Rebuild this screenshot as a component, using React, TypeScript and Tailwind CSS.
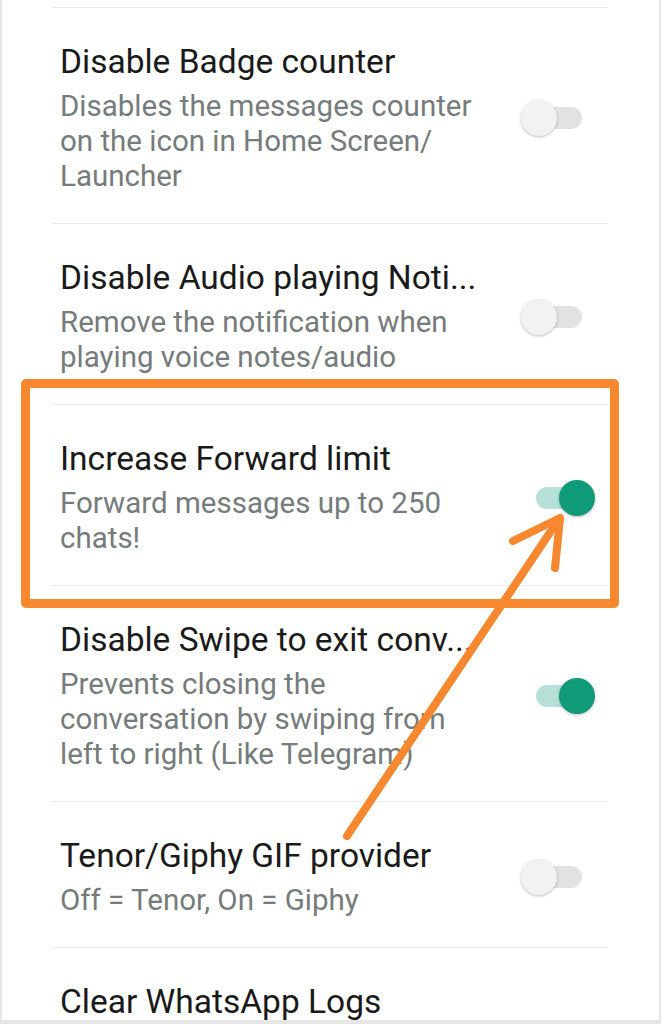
import React from 'react';

type Setting = {
  title: string;
  lines: string[];
  on?: boolean;
  toggle?: boolean;
};

const SETTINGS: Setting[] = [
  {
    title: 'Disable Badge counter',
    lines: ['Disables the messages counter', 'on the icon in Home Screen/', 'Launcher'],
    toggle: true,
  },
  {
    title: 'Disable Audio playing Noti...',
    lines: ['Remove the notification when', 'playing voice notes/audio'],
    toggle: true,
  },
  {
    title: 'Increase Forward limit',
    lines: ['Forward messages up to 250', 'chats!'],
    toggle: true,
    on: true,
  },
  {
    title: 'Disable Swipe to exit conv...',
    lines: ['Prevents closing the', 'conversation by swiping from', 'left to right (Like Telegram)'],
    toggle: true,
    on: true,
  },
  {
    title: 'Tenor/Giphy GIF provider',
    lines: ['Off = Tenor, On = Giphy'],
    toggle: true,
  },
  {
    title: 'Clear WhatsApp Logs',
    lines: [],
  },
];

const Toggle: React.FC<{ on?: boolean }> = ({ on }) => (
  <div className="relative w-[74px] h-[36px] shrink-0">
    <div
      className={`absolute left-[15px] top-[7px] w-[46px] h-[22px] rounded-full ${
        on ? 'bg-[#b7e0d8]' : 'bg-[#e2e2e2]'
      }`}
    />
    <div
      className={`absolute top-0 w-[36px] h-[36px] rounded-full shadow-[0_1px_3px_rgba(0,0,0,0.25)] ${
        on ? 'right-0 bg-[#0f9b78]' : 'left-0 bg-[#f2f2f2]'
      }`}
    />
  </div>
);

const Row: React.FC<{ item: Setting }> = ({ item }) => (
  <div className="flex items-center border-t border-[#ececec] pl-2 pr-[13px] pt-[34px] pb-[29px]">
    <div className="flex-1 min-w-0">
      <div className="text-[33.5px] leading-[40px] text-[#1a1a1a] whitespace-nowrap">{item.title}</div>
      {item.lines.length > 0 && (
        <div className="mt-[7px] text-[29.5px] leading-[35px] text-[#767b7b]">
          {item.lines.map((l) => (
            <div key={l} className="whitespace-nowrap">
              {l}
            </div>
          ))}
        </div>
      )}
    </div>
    {item.toggle && <Toggle on={item.on} />}
  </div>
);

export default function App() {
  return (
    <div
      className="relative w-[661px] h-[1024px] overflow-hidden bg-white border-l-2 border-r-2 border-b-4 border-[#e6e6e6]"
      style={{ fontFamily: 'Roboto, "Noto Sans", sans-serif' }}
    >
      <div className="pt-[7px] pl-[50px] pr-[51px]">
        {SETTINGS.map((s) => (
          <Row key={s.title} item={s} />
        ))}
      </div>

      {/* highlight box */}
      <div className="absolute left-[19px] top-[379px] w-[598px] h-[229px] border-[9px] border-[#f7882f] rounded-[5px]" />

      {/* arrow */}
      <svg className="absolute left-0 top-0" width="661" height="1024" viewBox="0 0 661 1024" fill="none">
        <g stroke="#f7882f" strokeWidth="8" strokeLinecap="round" strokeLinejoin="round">
          <line x1="345" y1="836" x2="557" y2="519" />
          <polyline points="511,541 558,518 553,568" />
        </g>
      </svg>
    </div>
  );
}
